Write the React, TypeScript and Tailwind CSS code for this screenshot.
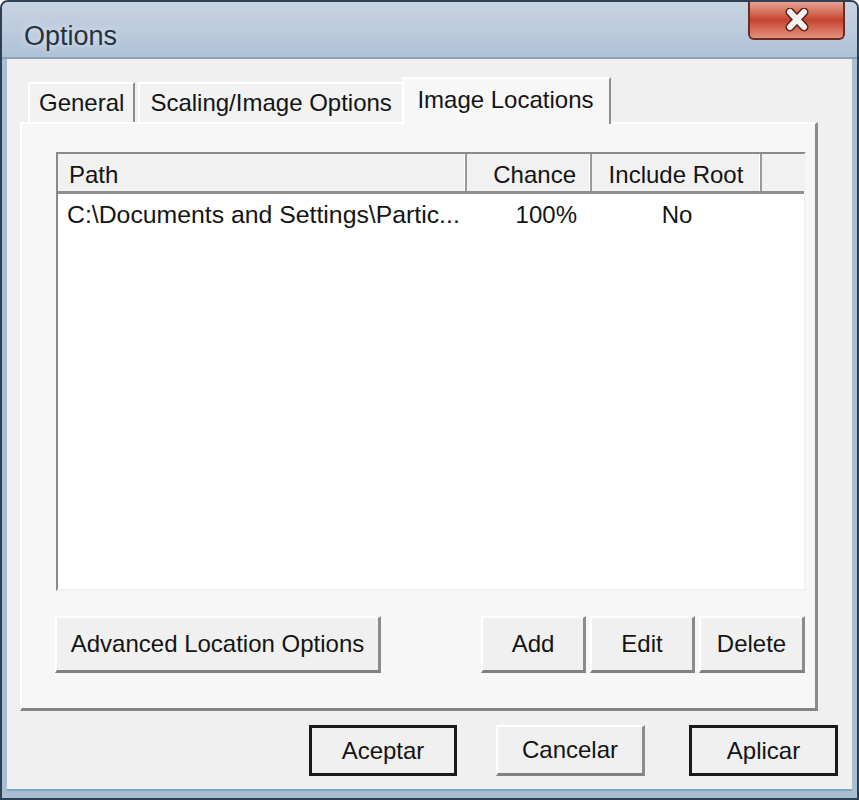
import React from "react";

const font = { fontFamily: '"Liberation Sans", Arial, sans-serif' };

const RaisedButton: React.FC<{ label: string; className?: string }> = ({ label, className = "" }) => (
  <div
    className={`flex items-center justify-center bg-[#f0f0f0] border-t-2 border-l-2 border-t-white border-l-white border-b-[3px] border-r-[3px] border-b-[#7f8084] border-r-[#8a8b8f] text-[24px] text-[#141414] ${className}`}
  >
    {label}
  </div>
);

const DefaultButton: React.FC<{ label: string; className?: string }> = ({ label, className = "" }) => (
  <div
    className={`flex items-center justify-center bg-[#f0f0f0] border-[3px] border-[#1a1a1a] text-[24px] text-[#141414] ${className}`}
  >
    {label}
  </div>
);

const HeaderCell: React.FC<{ label?: string; className?: string }> = ({ label, className = "" }) => (
  <div className={`flex items-center h-full pt-[5px] border-r-2 border-r-[#9a9a9a] shadow-[inset_-1px_0_0_#ffffff] ${className}`}>
    {label}
  </div>
);

export default function App() {
  return (
    <div
      className="w-[859px] h-[800px] flex flex-col bg-[#a9bdd3] border-[2px] border-[#2d3f52] rounded-t-[8px] overflow-hidden"
      style={font}
    >
      {/* title bar */}
      <div className="h-[57px] flex items-start justify-between bg-gradient-to-b from-[#c6d3e2] via-[#bccbdd] to-[#aec1d6] border-b-2 border-b-[#8aa0b8] shrink-0">
        <div className="pl-[22px] pt-[14px] text-[27px] text-[#26323f] [text-shadow:0_0_6px_#e8eef6]">Options</div>
        <div className="mr-[12px] w-[97px] h-[38px] rounded-b-[6px] border-2 border-t-0 border-[#6b2b22] bg-gradient-to-b from-[#e6a293] via-[#c4432f] to-[#e4907f] flex items-center justify-center">
          <svg width="34" height="24" viewBox="0 0 34 24">
            <path d="M10 4 L24 19 M24 4 L10 19" stroke="#5a2118" strokeWidth="9" strokeLinecap="round" />
            <path d="M10 4 L24 19 M24 4 L10 19" stroke="#f4f1f0" strokeWidth="6" strokeLinecap="round" />
          </svg>
        </div>
      </div>

      {/* client */}
      <div className="flex-1 flex flex-col mx-[5px] mb-[7px] bg-[#f0f0f0] border-b-[2px] border-[#7fa3c4]">
        <div className="pl-[13px] pt-[18px] flex flex-col">
          {/* tabs */}
          <div className="flex items-end h-[47px] relative z-10 -mb-[2px]">
            <div className="ml-[8px] h-[40px] mb-[2px] px-[9px] flex items-center text-[24px] text-[#141414] border-t-2 border-l-2 border-white border-r-2 border-r-[#8d8d8d] bg-[#f2f2f2]">
              General
            </div>
            <div className="ml-[3px] h-[40px] mb-[2px] w-[264px] px-[10px] flex items-center text-[24px] text-[#141414] border-t-2 border-l-2 border-white bg-[#f2f2f2]">
              Scaling/Image Options
            </div>
            <div className="h-[47px] w-[209px] px-[13px] pb-[4px] flex items-center text-[24px] text-[#141414] border-t-2 border-l-2 border-white border-r-2 border-r-[#8d8d8d] bg-[#f7f7f7]">
              Image Locations
            </div>
          </div>

          {/* panel */}
          <div className="w-[798px] h-[589px] bg-[#f7f7f7] border-t-2 border-l-2 border-white border-r-[3px] border-b-[3px] border-r-[#8b8b8b] border-b-[#858585] flex flex-col pl-[34px] pt-[28px]">
            {/* list view */}
            <div className="w-[750px] h-[439px] bg-white border-t-2 border-l-2 border-t-[#8a8a8a] border-l-[#8a8a8a] border-b-2 border-r-2 border-b-[#f2f2f2] border-r-[#f2f2f2] flex flex-col text-[24px] text-[#141414]">
              <div className="h-[40px] flex bg-[#f1f1f1] border-b-[3px] border-b-[#8e8e8e] shrink-0">
                <HeaderCell label="Path" className="w-[409px] pl-[11px]" />
                <HeaderCell label="Chance" className="w-[125px] justify-end pr-[14px]" />
                <HeaderCell label="Include Root" className="w-[170px] justify-center" />
                <div className="w-[42px]" />
              </div>
              <div className="h-[42px] flex items-center">
                <div className="w-[409px] pl-[9px] text-[24.8px]">C:\Documents and Settings\Partic...</div>
                <div className="w-[125px] text-right pr-[15px]">100%</div>
                <div className="w-[170px] text-center">No</div>
              </div>
            </div>

            {/* list buttons */}
            <div className="flex mt-[25px] h-[57px]">
              <RaisedButton label="Advanced Location Options" className="w-[326px] h-[57px] -ml-[1px]" />
              <div className="flex-1" />
              <div className="flex gap-[4px] mr-[10px]">
                <RaisedButton label="Add" className="w-[105px] h-[57px]" />
                <RaisedButton label="Edit" className="w-[105px] h-[57px]" />
                <RaisedButton label="Delete" className="w-[106px] h-[57px]" />
              </div>
            </div>
          </div>
        </div>

        {/* dialog buttons */}
        <div className="flex justify-end mt-[14px] pr-[14px] gap-[39px]">
          <DefaultButton label="Aceptar" className="w-[148px] h-[51px]" />
          <RaisedButton label="Cancelar" className="w-[149px] h-[51px] mr-[5px]" />
          <DefaultButton label="Aplicar" className="w-[149px] h-[51px]" />
        </div>
      </div>
    </div>
  );
}
